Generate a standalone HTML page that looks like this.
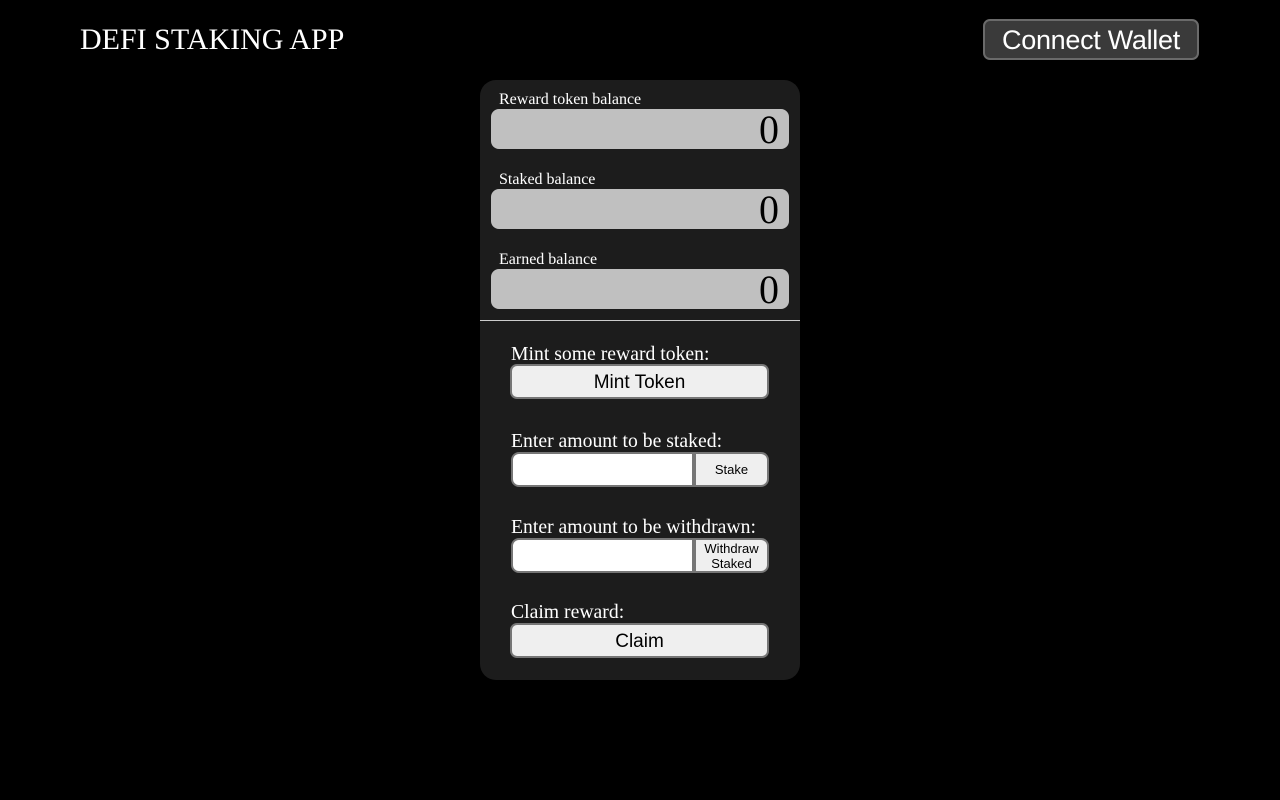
<!DOCTYPE html>
<html><head><style>
*{box-sizing:border-box;margin:0;padding:0}
body{width:1280px;height:800px;background:#000;position:relative;font-family:"Liberation Serif",serif;color:#fff;overflow:hidden}
.a{position:absolute}
.title{left:80px;top:22px;font-size:30px;line-height:36px;white-space:nowrap}
.cw{left:983px;top:19px;width:216px;height:41px;background:#3a3a3a;border:2px solid #6a6a6a;border-radius:7px;font-family:"Liberation Sans",sans-serif;font-size:27px;color:#fff;text-align:center;line-height:39px;letter-spacing:-0.3px}
.card{left:480px;top:80px;width:320px;height:600px;background:#1c1c1c;border-radius:16px}
.lbl{font-size:16px;line-height:18px;left:499px}
.bal{left:491px;width:298px;height:40px;background:#c0c0c0;border-radius:8px;color:#000;font-size:40px;text-align:right;padding-right:10px;line-height:42px}
.hr{left:480px;top:320px;width:320px;height:1px;background:#ccc}
.l2{left:511px;font-size:19.7px;line-height:22px;white-space:nowrap}
.btn{background:#efefef;border:2px solid #767676;border-radius:7px;color:#000;font-family:"Liberation Sans",sans-serif;text-align:center}
.inp{left:511px;width:184px;height:35px;background:#fff;border:2px solid #767676;border-right-width:3px;border-radius:8px 0 0 8px}
.sb{left:694px;width:75px;height:35px;border-radius:0 8px 8px 0;font-size:13px}
</style></head><body>
<div class="a title">DEFI STAKING APP</div>
<div class="a cw">Connect Wallet</div>
<div class="a card"></div>
<div class="a lbl" style="top:91px">Reward token balance</div>
<div class="a bal" style="top:109px">0</div>
<div class="a lbl" style="top:171px">Staked balance</div>
<div class="a bal" style="top:189px">0</div>
<div class="a lbl" style="top:251px">Earned balance</div>
<div class="a bal" style="top:269px">0</div>
<div class="a hr"></div>
<div class="a l2" style="top:343px">Mint some reward token:</div>
<div class="a btn" style="left:510px;top:364px;width:259px;height:35px;font-size:19px;line-height:34px">Mint Token</div>
<div class="a l2" style="top:430px">Enter amount to be staked:</div>
<div class="a inp" style="top:452px"></div>
<div class="a btn sb" style="top:452px;line-height:31px">Stake</div>
<div class="a l2" style="top:516px">Enter amount to be withdrawn:</div>
<div class="a inp" style="top:538px"></div>
<div class="a btn sb" style="top:538px;line-height:15px;padding-top:1px">Withdraw<br>Staked</div>
<div class="a l2" style="top:601px">Claim reward:</div>
<div class="a btn" style="left:510px;top:623px;width:259px;height:35px;font-size:19px;line-height:34px">Claim</div>
</body></html>
